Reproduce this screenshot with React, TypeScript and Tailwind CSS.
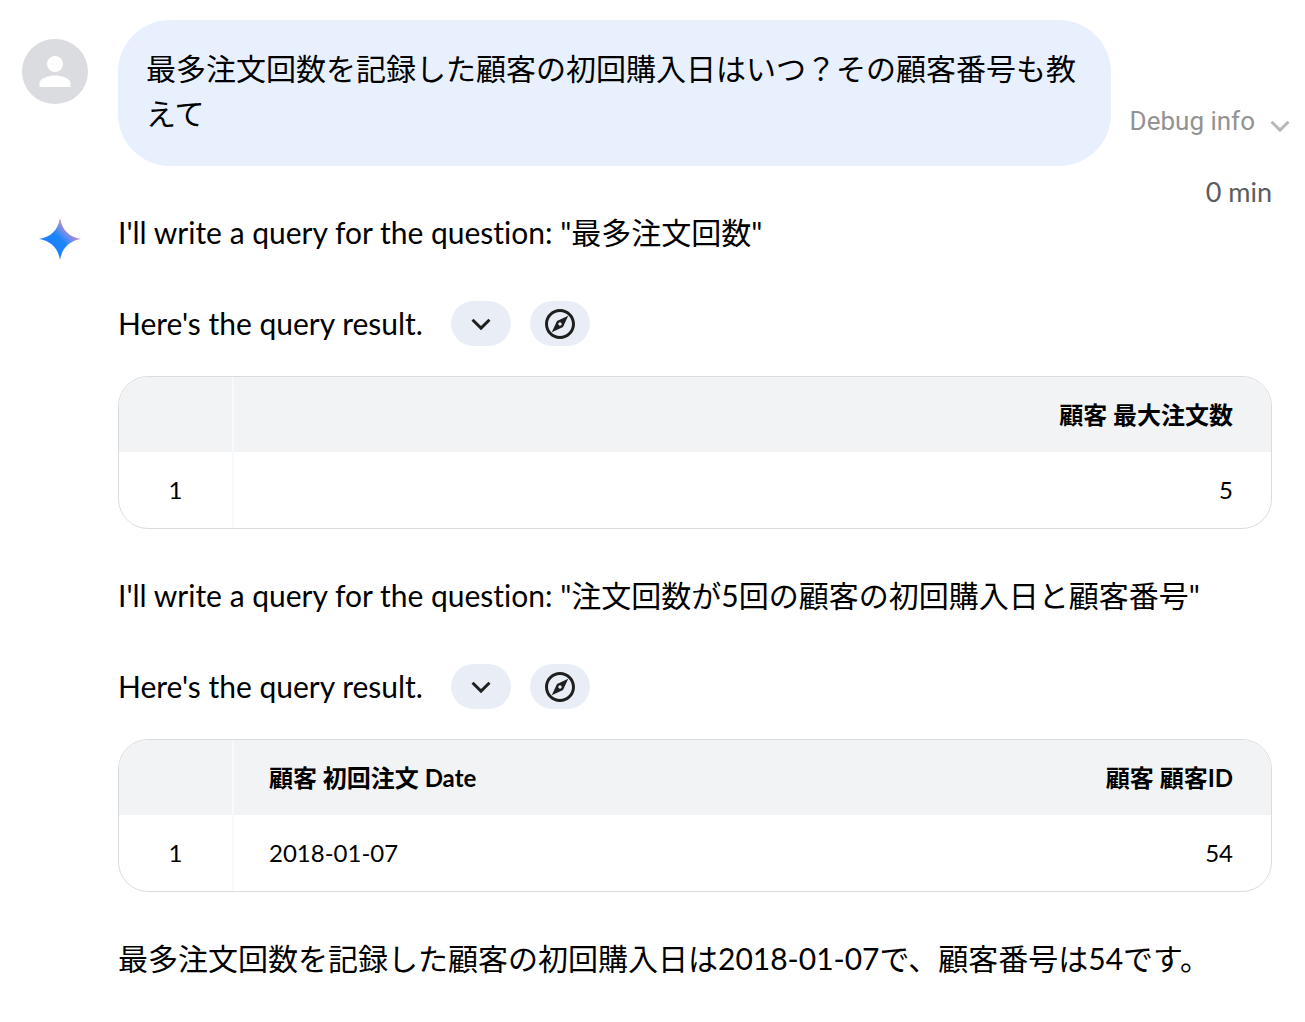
import React from "react";

type Column = { label: string; align: "left" | "right" };

type ResultTableProps = {
  title: string;
  columns: Column[];
  rows: string[][];
};

function ChevronDown() {
  return (
    <svg viewBox="0 0 24 24" className="size-[38px]" fill="currentColor" aria-hidden="true">
      <path d="M7.3 8.700 12 13.300l4.700-4.600L18 10l-6 6-6-6z" />
    </svg>
  );
}

function Compass() {
  return (
    <svg viewBox="0 0 24 24" className="size-9" fill="currentColor" aria-hidden="true">
      <path d="M12 2C6.48 2 2 6.48 2 12s4.48 10 10 10 10-4.48 10-10S17.52 2 12 2zm0 18c-4.41 0-8-3.59-8-8s3.59-8 8-8 8 3.59 8 8-3.59 8-8 8zm-5.5-2.5 7.51-3.49L17.5 6.5 9.99 9.99 6.5 17.5zm5.5-6.6c.61 0 1.1.49 1.1 1.1s-.49 1.1-1.1 1.1-1.1-.49-1.1-1.1.49-1.1 1.1-1.1z" />
    </svg>
  );
}

function Avatar() {
  return (
    <div className="flex h-[65px] w-[66px] shrink-0 items-center justify-center rounded-full bg-[#dadce0]">
      <svg viewBox="0 0 32 32" className="size-8" fill="white" aria-hidden="true">
        <circle cx="16" cy="8" r="8" />
        <path d="M.5 31v-4C.5 22 10.500 19.500 16 19.500S31.500 22 31.500 27v4z" />
      </svg>
    </div>
  );
}

function Spark() {
  return (
    <svg viewBox="0 0 42 42" className="size-[42px]" aria-hidden="true">
      <defs>
        <linearGradient id="spark" x1="10" y1="32" x2="32" y2="10" gradientUnits="userSpaceOnUse">
          <stop offset="0" stopColor="#1c7dff" />
          <stop offset="0.5" stopColor="#1a86fb" />
          <stop offset="0.68" stopColor="#5b8def" />
          <stop offset="1" stopColor="#d98ac8" />
        </linearGradient>
      </defs>
      <path d="M21 0C23 12 30 19 42 21 30 23 23 30 21 42 19 30 12 23 0 21 12 19 19 12 21 0z" fill="url(#spark)" />
    </svg>
  );
}

function ResultHeading() {
  return (
    <div className="mt-[46px] flex items-center">
      <p>Here's the query result.</p>
      <div className="ml-7 flex gap-[19px] text-[#1f1f1f]">
        <button type="button" aria-label="Show query details" className="flex h-[45px] w-[60px] items-center justify-center rounded-full bg-[#e9eef6]">
          <ChevronDown />
        </button>
        <button type="button" aria-label="Explore result" className="flex h-[45px] w-[60px] items-center justify-center rounded-full bg-[#e9eef6]">
          <Compass />
        </button>
      </div>
    </div>
  );
}

function ResultTable({ title, columns, rows }: ResultTableProps) {
  return (
    <div className="mt-[30px] overflow-hidden rounded-[30px] border border-[#dadce0]">
      <table aria-label={title} className="w-full text-[24px] leading-9">
        <thead className="bg-[#f1f3f4]">
          <tr className="h-[75px]">
            <td className="w-[114px] border-r-2 border-[#f8f9fa]" />
            {columns.map((c) => (
              <th
                key={c.label}
                scope="col"
                className={c.align === "right" ? "pr-[38px] text-right font-bold" : "pl-[35px] text-left font-bold"}
              >
                {c.label}
              </th>
            ))}
          </tr>
        </thead>
        <tbody>
          {rows.map((row, i) => (
            <tr key={i} className="h-[76px]">
              <th scope="row" className="w-[114px] border-r-2 border-[#f8f9fa] text-center font-normal">
                {i + 1}
              </th>
              {row.map((cell, j) => (
                <td key={j} className={columns[j].align === "right" ? "pr-[38px] text-right" : "pl-[35px] text-left"}>
                  {cell}
                </td>
              ))}
            </tr>
          ))}
        </tbody>
      </table>
    </div>
  );
}

export default function App() {
  return (
    <main
      lang="ja"
      className="min-h-screen bg-white pt-5 pb-10 pl-[22px] font-[Lato,'Noto_Sans_CJK_JP',sans-serif] text-[30px] leading-[45px] text-black [font-variant-ligatures:none]"
    >
      <section className="flex pr-[6px]">
        <div className="mt-[19px] mr-[30px]">
          <Avatar />
        </div>
        <p className="min-w-0 flex-1 rounded-[52px] bg-[#e8f0fe] px-7 pt-[26px] pb-[30px]">
          最多注文回数を記録した顧客の初回購入日はいつ？その顧客番号も教えて
        </p>
        <button type="button" className="mb-[21px] ml-[19px] flex shrink-0 items-center gap-[6px] self-end font-[Roboto,sans-serif] text-[26px] text-[#929292]">
          Debug info
          <span className="mt-[9px] text-[#b8b8b8]">
            <ChevronDown />
          </span>
        </button>
      </section>

      <section className="pr-[33px]">
        <p className="mt-2 text-right text-[27px] leading-9 text-[#5a5c5f]">0 min</p>
        <div className="flex">
          <div className="mt-2 w-24 shrink-0 pl-[17px]">
            <Spark />
          </div>
          <div className="min-w-0 flex-1">
            <p>I'll write a query for the question: "最多注文回数"</p>
            <ResultHeading />
            <ResultTable
              title="顧客 最大注文数"
              columns={[{ label: "顧客 最大注文数", align: "right" }]}
              rows={[["5"]]}
            />
            <p className="mt-11">I'll write a query for the question: "注文回数が5回の顧客の初回購入日と顧客番号"</p>
            <ResultHeading />
            <ResultTable
              title="顧客の初回注文日と顧客ID"
              columns={[
                { label: "顧客 初回注文 Date", align: "left" },
                { label: "顧客 顧客ID", align: "right" },
              ]}
              rows={[["2018-01-07", "54"]]}
            />
            <p className="mt-11">最多注文回数を記録した顧客の初回購入日は2018-01-07で、顧客番号は54です。</p>
          </div>
        </div>
      </section>
    </main>
  );
}
